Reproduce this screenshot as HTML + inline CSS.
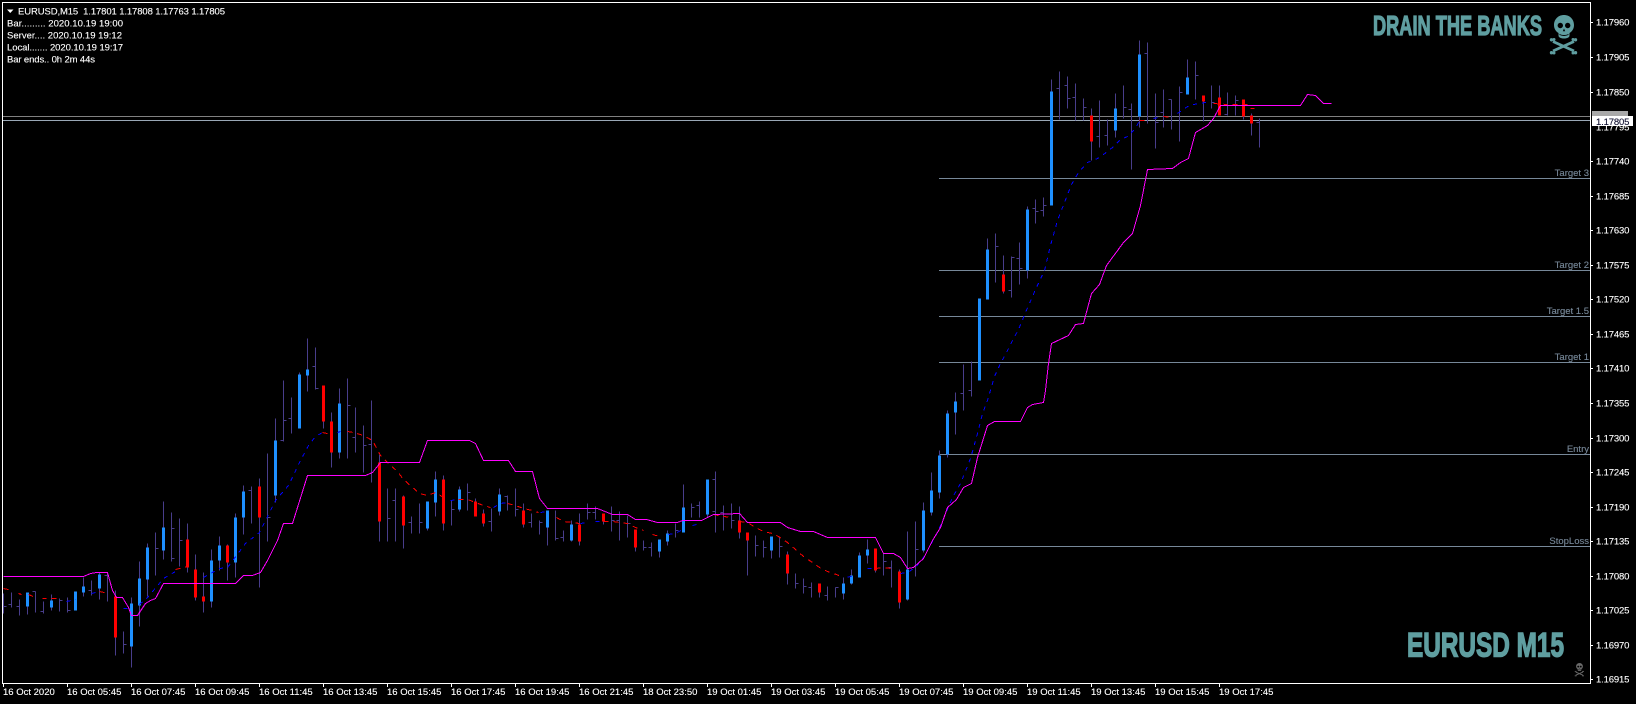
<!DOCTYPE html>
<html><head><meta charset="utf-8"><title>EURUSD,M15</title>
<style>html,body{margin:0;padding:0;background:#000;width:1636px;height:704px;overflow:hidden}svg{display:block}text{font-family:"Liberation Sans",sans-serif;fill:#fff;font-size:9.5px;stroke:#fff;stroke-width:.12}</style></head>
<body>
<svg width="1636" height="704" viewBox="0 0 1636 704" xmlns="http://www.w3.org/2000/svg">
<defs>
<g id="skull">
<path d="M1564 15c-5.800 0-10 4.300-10 10 0 3.800 1.800 6.300 4.500 8v2.500c0 1.800 2 3 5.500 3s5.500-1.200 5.500-3V33c2.700-1.700 4.500-4.200 4.500-8 0-5.700-4.200-10-10-10z"/>
<path d="M1553 41.500L1574 51M1574 41.500L1553 51" stroke="currentColor" stroke-width="2.800" fill="none"/>
<circle cx="1551.500" cy="39.800" r="1.700"/><circle cx="1554" cy="39.500" r="1.500"/><circle cx="1551.500" cy="52.700" r="1.700"/><circle cx="1554" cy="53" r="1.500"/>
<circle cx="1575.500" cy="39.800" r="1.700"/><circle cx="1573" cy="39.500" r="1.500"/><circle cx="1575.500" cy="52.700" r="1.700"/><circle cx="1573" cy="53" r="1.500"/>
<circle cx="1560.300" cy="25.500" r="2.700" fill="#000"/><circle cx="1567.700" cy="25.500" r="2.700" fill="#000"/>
<path d="M1564 28.500l-1.200 2.800h2.400z" fill="#000"/>
<path d="M1559.500 34.500q4.500 2 9 0" stroke="#000" stroke-width=".9" fill="none"/>
</g>
</defs>
<rect width="1636" height="704" fill="#000"/>
<g shape-rendering="crispEdges">
<path d="M2.500 2V683.500H1590.500V2M2 2.500H1590.500" stroke="#fff" stroke-width="1" fill="none"/>
<path d="M3 116.500H1590" stroke="#808080"/>
<path d="M3 120.500H1590" stroke="#9aa8b6"/>
<path d="M939 178.500H1590M939 270.500H1590M939 316.500H1590M939 362.500H1590M939 454.500H1590M939 546.500H1590" stroke="#778899"/>
</g>
<g transform="translate(.5,.5)" shape-rendering="crispEdges" fill="none">
<path stroke="#483d8b" d="M3 593V613M3 606h3M11 592V607M11 604h-3M19 599V615M19 606h-3M27 592V614M35 591V612M35 591h-3M43 601V613M43 611h-3M51 594V610M59 598V611M59 600h3M67 597V612M67 610h3M75 591V610M83 577V596M91 580V595M91 590h-3M99 572V599M107 573V601M107 575h-3M115 590V655M123 631V653M123 644h3M131 597V667M139 561V626M147 543V596M155 532V575M155 548h3M163 501V559M171 512V561M171 528h3M171 558h3M179 518V566M179 540h3M187 523V572M195 554V600M203 572V612M211 549V607M219 536V570M227 544V580M235 513V577M243 485V534M251 486V523M251 490h-3M259 478V587M267 453V541M267 517h3M275 418V502M283 380V441M283 440h-3M283 420h3M291 397V433M291 418h-3M299 372V428M307 338V391M315 347V389M315 366h-3M315 388h3M323 385V428M331 412V467M339 388V458M347 378V458M347 405h3M355 407V452M355 437h-3M363 425V472M363 445h3M371 400V482M371 444h-3M379 454V541M387 488V541M387 518h3M395 488V541M395 500h-3M403 495V548M411 516V533M411 522h-3M419 503V533M419 522h3M427 501V530M435 471V516M443 475V530M451 500V525M451 509h3M459 486V511M467 483V510M467 492h3M475 498V516M483 509V526M491 508V531M491 521h-3M499 488V515M507 495V510M507 496h-3M515 488V516M515 509h3M523 503V527M531 513V527M531 522h-3M539 520V534M539 522h3M547 510V545M555 510V540M555 538h3M563 530V541M563 537h-3M571 520V541M579 513V545M587 503V519M587 512h3M595 506V519M595 512h-3M603 513V524M611 506V531M611 520h3M619 511V540M619 520h-3M627 515V537M627 523h3M635 529V551M643 540V550M643 547h3M651 542V556M651 547h-3M659 539V557M667 530V545M675 523V537M675 530h3M683 484V532M691 503V517M691 507h3M699 501V517M699 505h-3M707 479V517M715 471V532M715 479h-3M715 511h-3M723 505V530M723 512h-3M731 503V528M731 520h3M739 506V538M747 532V575M755 535V556M755 545h3M763 540V557M763 547h3M771 536V558M779 536V557M779 546h3M787 551V584M795 573V588M795 583h3M803 578V593M803 586h3M811 582V597M811 587h-3M819 583V597M827 586V600M827 595h-3M835 587V597M835 587h3M843 577V599M851 569V584M859 552V577M867 539V563M875 548V572M883 553V575M883 561h3M891 560V587M891 567h-3M899 569V608M907 531V600M915 521V576M915 549h3M923 502V552M931 472V515M939 450V498M947 410V457M955 392V434M963 364V410M963 393h-3M971 361V396M971 390h-3M979 298V380M987 238V299M995 233V282M995 246h3M1003 255V293M1011 256V297M1011 257h3M1011 290h-3M1019 242V284M1019 258h-3M1019 268h3M1027 206V278M1035 199V223M1035 208h-3M1035 211h3M1043 197V216M1043 210h-3M1043 205h3M1051 79V205M1059 71V119M1059 88h-3M1067 76V108M1067 85h-3M1067 98h3M1075 83V120M1075 97h-3M1083 98V120M1083 107h3M1091 108V160M1099 100V147M1099 136h-3M1107 119V145M1107 135h-3M1115 93V137M1123 85V118M1123 107h3M1131 103V169M1131 109h-3M1139 40V127M1147 42V123M1147 53h-3M1155 93V148M1155 122h3M1163 89V127M1163 112h-3M1171 99V129M1171 99h-3M1179 86V141M1179 92h3M1187 59V94M1195 61V99M1195 75h3M1203 95V121M1211 85V108M1211 102h3M1219 85V115M1227 92V115M1227 114h-3M1235 95V115M1235 100h3M1243 99V119M1251 113V135M1259 118V147M1259 122h-3"/>
<path stroke="#1e90ff" stroke-width="3" d="M27 592V606M51 600V607M75 591V610M83 586V592M99 574V588M131 603V646M139 578V605M147 547V579M163 527V550M211 560V601M219 545V560M235 517V562M243 491V517M275 440V495M299 374V428M307 369V375M339 403V452M427 501V528M435 479V502M459 489V509M499 494V511M547 510V527M571 524V540M659 539V551M667 533V541M683 507V532M707 479V514M771 536V550M843 583V593M851 575V583M859 555V577M867 549V555M907 569V599M923 510V550M931 490V512M939 455V492M947 413V454M955 401V412M979 298V380M987 249V299M1027 209V270M1051 91V205M1115 108V130M1139 54V116M1187 77V94"/>
<path stroke="#ff0000" stroke-width="3" d="M115 596V637M187 539V567M195 569V597M203 596V601M227 545V562M259 486V517M323 385V421M331 421V452M379 462V521M403 496V525M443 479V523M475 501V516M483 513V523M523 510V524M579 524V541M603 513V521M635 529V547M739 520V532M747 532V540M787 554V573M819 583V592M875 548V570M899 571V602M1003 274V291M1091 115V141M1203 95V101M1219 97V115M1243 99V116M1251 115V123"/>
<path stroke="#0000ff" stroke-dasharray="4 5" d="M66 601L75 599M83 596V596M91 593L99 591M123 608H131M139 604L147 597L163 578L175 571M203 577L219 568L227 567L245 543L259 532L275 500L288 485L300 460L308 445L315 436L322 432M337 432L340 431M450 500L458 499M493 507L500 503L507 502M540 512L547 511M580 523L587 522M595 521H600M668 534L675 533L682 529M692 525L700 523M851 576L843 577M867 568H875M900 573L907 572L915 567L923 557L937 532L952 497L960 483L970 458L977 433L982 413L987 400L994 376L1000 363L1006 352L1012 340L1018 329L1025 312L1035 289L1044 270L1050 245L1057 220L1062 207L1071 184L1078 172L1087 162L1097 158L1103 154L1112 147L1120 139L1127 136L1135 128L1139 120M1153 118L1162 116M1177 113L1187 106L1193 104L1205 102L1210 102"/>
<path stroke="#ff0000" stroke-dasharray="5 5" d="M3 588L12 590M18 593L21 594M28 594L35 597M42 598H46M51 598H60M99 591L108 593M175 569L187 566M322 432L331 434M347 431L353 432L363 435L372 440L380 455L388 463L397 471L403 479L411 486L419 493L427 495L435 492L443 497M458 499H467L475 502L483 505L490 507M507 503L515 505L523 508L532 510L538 512M556 517L563 521L572 522L579 523M603 521L612 521L627 523L635 527L643 530M652 534L659 536M713 514L723 516L732 517M739 521L747 522L755 527L763 531L772 533L778 536L787 542L795 549L803 556L812 562L819 567L827 571L836 574L843 577M875 568L883 567L891 568M1139 120H1147M1163 116L1171 117M1213 103L1227 104M1232 104H1247M1250 108H1254"/>
<path stroke="#ff00ff" d="M3 576H83L90 573L96 572H107L112 590L116 597H122L128 607L131 615H137L145 603L150 600L155 598L163 583H235L243 575H252L260 572L267 560L277 540L283 523H292L307 475H365L372 472L380 462H419L427 440H469L475 443L483 460H508L515 471H532L539 498L547 508H597L612 514H627L635 519H646L657 522H677L682 520H701L713 514L739 513L747 522H780L787 527L800 531H813L827 537H875L883 553H893L900 557L907 568L913 567L923 558L932 540L940 527L947 507L956 499L963 487L971 483L977 457L987 425L994 421H1015H1020L1027 407L1032 404L1043 402L1045 390L1048 363L1051 343L1068 335L1075 324L1083 323L1091 293L1099 284L1106 265L1123 242L1132 233L1140 205L1147 169L1172 168L1180 162L1188 158L1195 132L1207 125L1213 118L1220 105H1300L1307 94L1315 95L1323 103H1331"/>
</g>
<!-- axis ticks -->
<g shape-rendering="crispEdges" fill="none" stroke="#fff"><path d="M1590 22.500h3M1590 57.500h3M1590 92.500h3M1590 161.500h3M1590 196.500h3M1590 230.500h3M1590 265.500h3M1590 299.500h3M1590 334.500h3M1590 368.500h3M1590 403.500h3M1590 438.500h3M1590 472.500h3M1590 507.500h3M1590 541.500h3M1590 576.500h3M1590 610.500h3M1590 645.500h3M1590 679.500h3"/>
<path d="M3.500 684v3M67.500 684v3M131.500 684v3M195.500 684v3M259.500 684v3M323.500 684v3M387.500 684v3M451.500 684v3M515.500 684v3M579.500 684v3M643.500 684v3M707.500 684v3M771.500 684v3M835.500 684v3M899.500 684v3M963.500 684v3M1027.500 684v3M1091.500 684v3M1155.500 684v3M1219.500 684v3"/></g>
<!-- price labels -->
<g letter-spacing="-.15">
<text x="1596" y="25.500">1.17960</text><text x="1596" y="60.500">1.17905</text><text x="1596" y="95.500">1.17850</text><text x="1596" y="164.500">1.17740</text><text x="1596" y="199.500">1.17685</text><text x="1596" y="233.500">1.17630</text><text x="1596" y="268.500">1.17575</text><text x="1596" y="302.500">1.17520</text><text x="1596" y="337.500">1.17465</text><text x="1596" y="371.500">1.17410</text><text x="1596" y="406.500">1.17355</text><text x="1596" y="441.500">1.17300</text><text x="1596" y="475.500">1.17245</text><text x="1596" y="510.500">1.17190</text><text x="1596" y="544.500">1.17135</text><text x="1596" y="579.500">1.17080</text><text x="1596" y="613.500">1.17025</text><text x="1596" y="648.500">1.16970</text><text x="1596" y="682.500">1.16915</text>
<text x="1596" y="130.500">1.17795</text>
<rect x="1592" y="111" width="36" height="5" fill="#a9a9a9"/>
<rect x="1592" y="116" width="41" height="10" fill="#fff"/>
<text x="1596" y="125" style="fill:#101030;stroke:#101030">1.17805</text>
</g>
<!-- time labels -->
<text x="3" y="695">16 Oct 2020</text><text x="67" y="695">16 Oct 05:45</text><text x="131" y="695">16 Oct 07:45</text><text x="195" y="695">16 Oct 09:45</text><text x="259" y="695">16 Oct 11:45</text><text x="323" y="695">16 Oct 13:45</text><text x="387" y="695">16 Oct 15:45</text><text x="451" y="695">16 Oct 17:45</text><text x="515" y="695">16 Oct 19:45</text><text x="579" y="695">16 Oct 21:45</text><text x="643" y="695">18 Oct 23:50</text><text x="707" y="695">19 Oct 01:45</text><text x="771" y="695">19 Oct 03:45</text><text x="835" y="695">19 Oct 05:45</text><text x="899" y="695">19 Oct 07:45</text><text x="963" y="695">19 Oct 09:45</text><text x="1027" y="695">19 Oct 11:45</text><text x="1091" y="695">19 Oct 13:45</text><text x="1155" y="695">19 Oct 15:45</text><text x="1219" y="695">19 Oct 17:45</text>
<!-- header -->
<path d="M7 9.500h6.500l-3.250 3.500z" fill="#fff"/>
<text x="18" y="14.500" xml:space="preserve" textLength="207">EURUSD,M15  1.17801 1.17808 1.17763 1.17805</text>
<text x="7" y="26.500" textLength="116">Bar......... 2020.10.19 19:00</text>
<text x="7" y="38.500" textLength="115">Server.... 2020.10.19 19:12</text>
<text x="7" y="50.500" textLength="116">Local....... 2020.10.19 19:17</text>
<text x="7" y="62.500" textLength="88">Bar ends.. 0h 2m 44s</text>
<!-- target labels -->
<g text-anchor="end">
<text x="1589" y="176" style="fill:#778899;stroke:#778899">Target 3</text>
<text x="1589" y="268" style="fill:#778899;stroke:#778899">Target 2</text>
<text x="1589" y="314" style="fill:#778899;stroke:#778899">Target 1.5</text>
<text x="1589" y="360" style="fill:#778899;stroke:#778899">Target 1</text>
<text x="1589" y="452" style="fill:#778899;stroke:#778899">Entry</text>
<text x="1589" y="544" style="fill:#778899;stroke:#778899">StopLoss</text>
</g>
<!-- titles -->
<text x="1373" y="35" textLength="169" lengthAdjust="spacingAndGlyphs" style="font-size:27.500px;font-weight:bold;fill:#5f9ea0;stroke:#5f9ea0;stroke-width:1.200">DRAIN THE BANKS</text>
<text x="1407" y="656.500" textLength="157" lengthAdjust="spacingAndGlyphs" style="font-size:34.500px;font-weight:bold;fill:#5f9ea0;stroke:#5f9ea0;stroke-width:1.400">EURUSD M15</text>
<use href="#skull" fill="#5f9ea0" color="#5f9ea0"/>
<use href="#skull" fill="#6a6a6a" color="#6a6a6a" transform="translate(1579.500,663) scale(.34) translate(-1564,-15)"/>
</svg>
</body></html>
